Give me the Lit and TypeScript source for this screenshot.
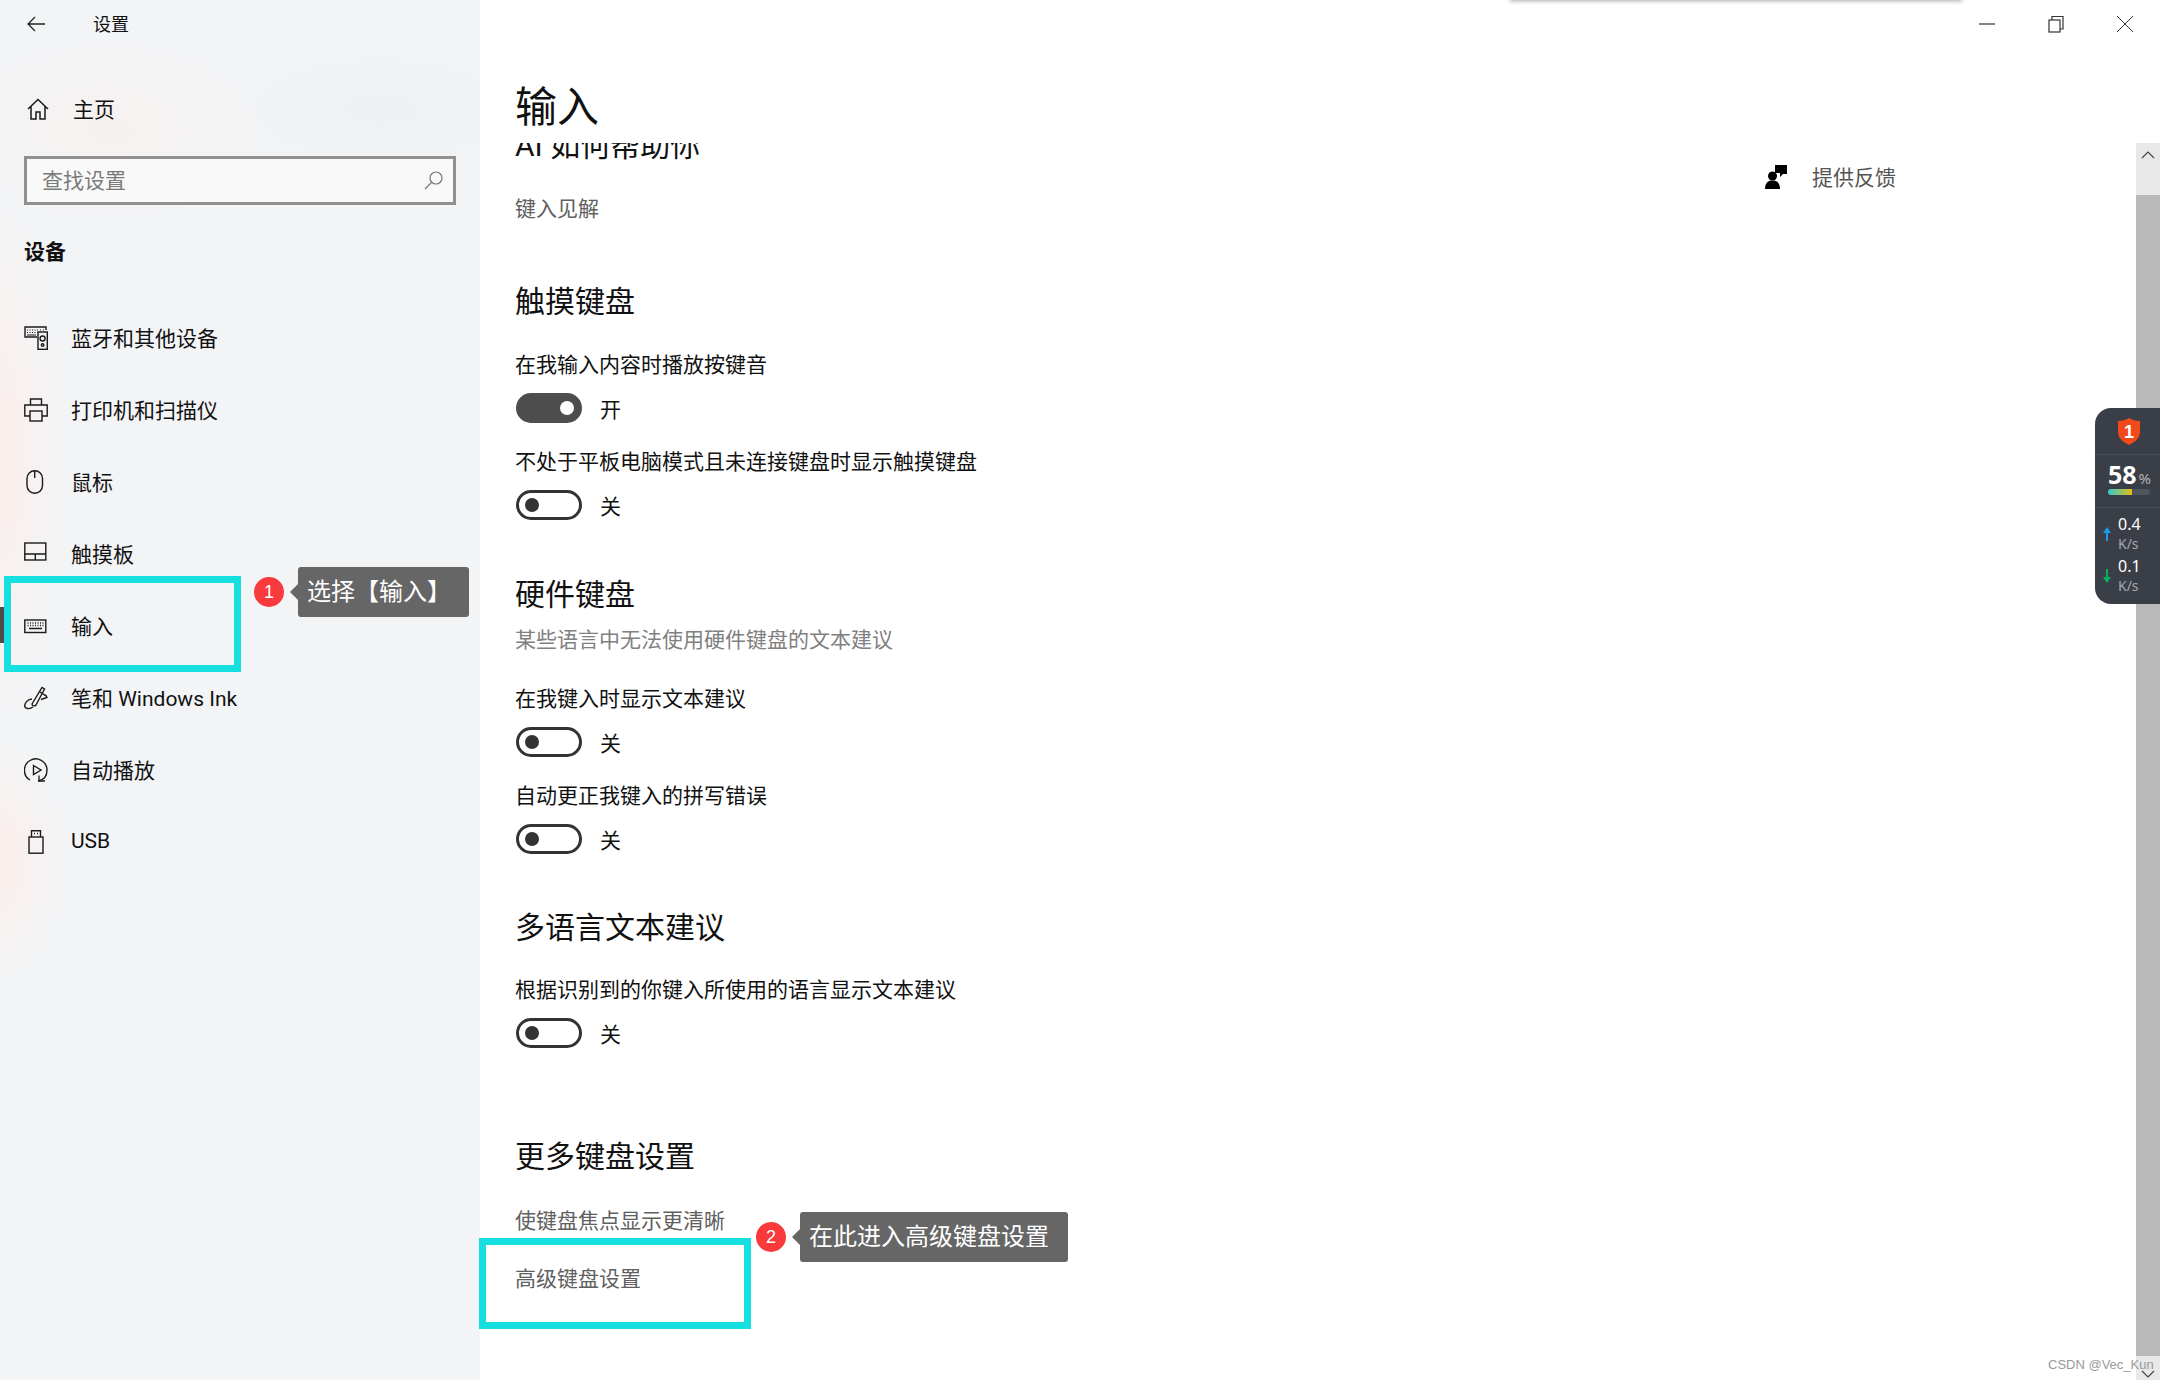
import { LitElement, html, css, svg } from "lit";
import { customElement } from "lit/decorators.js";

const icon = (body: unknown) => html`<svg class="ic" viewBox="0 0 24 24" fill="none" stroke="#1a1a1a" stroke-width="1.4">${body}</svg>`;

const icons: Record<string, unknown> = {
  bt: icon(svg`<path d="M22 4V1H1v10h12"/><path d="M3 4h1M5.500 4h1M8 4h1M10.500 4h1M13 4h1M16 4h1M19 4h1M3 6.500h1M5.500 6.500h1M8 6.500h1M10.500 6.500h1M3 9h9" stroke-width="1.200"/><rect x="14" y="6" width="9.300" height="17.300"/><circle cx="18.600" cy="12.500" r="2.500"/><circle cx="18.600" cy="19" r="1.300"/>`),
  print: icon(svg`<path d="M6.500 7V1h11v6M6 18H.8V7h22.400v11H18"/><rect x="6" y="13" width="12" height="10"/>`),
  mouse: icon(svg`<rect x="3" y=".8" width="15.500" height="22.400" rx="7.700"/><path d="M10.700 1v7"/>`),
  pad: icon(svg`<rect x=".8" y="1" width="21" height="17"/><path d="M.8 12h21M11.300 12v6"/>`),
  kb: icon(svg`<rect x=".8" y="6" width="21" height="12.500"/><path d="M3.500 9h1M6 9h1M8.500 9h1M11 9h1M13.500 9h1M16 9h1M18.500 9h1M3.500 11.500h1M6 11.500h1M8.500 11.500h1M11 11.500h1M13.500 11.500h1M16 11.500h1M18.500 11.500h1M5 14.500h13" stroke-width="1.300"/>`),
  pen: icon(svg`<path d="M8 18 18 1.500l2.500 1.500-8.500 16c-1 1.500-4 1-4-1Z"/><path d="M16 6l4 2.500c2 1 3 2.500 3 3l-6 2M8 13c-4 0-7.500 4-7.300 7 .2 3 5 3.500 8.300 1"/>`),
  play: icon(svg`<path d="M14 23c6-1 9-5.500 9-11A11.300 11.300 0 1 0 6 22"/><path d="M9.500 7.500 17 12l-7.500 4.500Z"/><path d="M15 17.500v5.500h6" stroke-width="1.300"/>`),
  usb: icon(svg`<path d="M7.500 7V.8h9V7"/><rect x="5" y="7" width="14" height="16.200"/><path d="M10 3.500h1M13 3.500h1"/>`),
};

const navItems = [
  ["bt", "蓝牙和其他设备"],
  ["print", "打印机和扫描仪"],
  ["mouse", "鼠标"],
  ["pad", "触摸板"],
  ["kb", "输入"],
  ["pen", "笔和 Windows Ink"],
  ["play", "自动播放"],
  ["usb", "USB"],
];

@customElement("app-root")
export class AppRoot extends LitElement {
  static styles = css`
    :host {
      display: block;
      position: relative;
      width: 2160px;
      height: 1380px;
      overflow: hidden;
      background: #fff;
      color: #111;
      font-family: Roboto, "Noto Sans CJK SC", sans-serif;
      font-size: 21px;
      text-spacing-trim: space-all;
    }
    .window { display: flex; height: 100%; }
    .side {
      width: 480px;
      flex: none;
      display: flex;
      flex-direction: column;
      background:
        radial-gradient(ellipse 60px 260px at 0 460px, #fbeeea, transparent),
        radial-gradient(ellipse 60px 120px at 0 860px, #fbeeea, transparent),
        radial-gradient(ellipse 150px 90px at 110px 130px, #f6f1ef, transparent),
        radial-gradient(ellipse 200px 80px at 380px 110px, #eff0f1, transparent),
        #f3f4f6;
    }
    .side-head { height: 48px; display: flex; align-items: center; padding-left: 27px; font-size: 18px; }
    .side-head span { padding-bottom: 2px; }
    .side-head svg { width: 18px; height: 16px; margin-right: 48px; }
    .home { margin-top: 25px; height: 72px; display: flex; align-items: center; padding-left: 27px; gap: 24px; }
    .home span { padding-bottom: 2px; }
    .home svg { width: 22px; height: 22px; }
    .search {
      margin: 11px 24px 0;
      height: 49px;
      box-sizing: border-box;
      border: 3px solid #919191;
      background: #f9f9f9;
      display: flex;
      align-items: center;
      justify-content: space-between;
      padding: 0 10px 0 15px;
      color: #7a7a7a;
    }
    .search span { padding-bottom: 4px; }
    .search svg { width: 19px; height: 19px; }
    .group { margin: 32px 0 35px 24px; height: 30px; line-height: 30px; font-weight: 700; }
    .nav { position: relative; height: 72px; display: flex; align-items: center; padding-left: 24px; gap: 23px; }
    .nav span { padding-bottom: 2px; }
    .ic { width: 24px; height: 24px; flex: none; }
    .nav.on::before { content: ""; position: absolute; left: 0; top: 17px; width: 4px; height: 36px; background: #4c4c4c; }

    .main { flex: 1; min-width: 0; display: flex; flex-direction: column; }
    .bar { height: 48px; flex: none; display: flex; justify-content: flex-end; padding-right: 1px; }
    .ctl { width: 69px; display: flex; align-items: center; justify-content: center; }
    .ctl svg { width: 18px; height: 18px; }
    .title { height: 95px; flex: none; box-sizing: border-box; padding: 31px 0 0 35px; font-size: 42px; line-height: 58px; color: #111; }
    .body { flex: 1; min-height: 0; display: flex; overflow: hidden; }
    .content { width: 1285px; flex: none; box-sizing: border-box; padding-left: 35px; }
    .h { height: 40px; line-height: 40px; font-size: 30px; white-space: nowrap; color: #111; }
    .t { height: 30px; line-height: 30px; white-space: nowrap; }
    .link { color: #606060; }
    .note { color: #808080; margin-top: 10px; }
    .first-h { margin-top: -17px; }
    .s { margin-top: 24px; }
    .h + .s { margin-top: 28px; }
    .h + .s.tight { margin-top: 27px; }
    .link-first { margin-top: 28px; }
    .link-first.loose { margin-top: 29px; }
    .sec { margin-top: 54px; }
    .sec.hw { margin-top: 55px; }
    .sec.wide { margin-top: 89px; }
    .sec.top { margin-top: 58px; }
    .note + .s { margin-top: 29px; }
    .tog-row { margin: 13px 0 0 1px; height: 30px; display: flex; align-items: center; gap: 18px; }
    .tog {
      width: 66px; height: 30px; box-sizing: border-box; border-radius: 15px;
      border: 3px solid #333; display: flex; align-items: center; padding: 0 6px;
    }
    .tog i { width: 14px; height: 14px; border-radius: 50%; background: #333; }
    .tog.on { background: #4d4d4d; border-color: #4d4d4d; justify-content: flex-end; padding: 0 5px; }
    .tog.on i { background: #fff; }
    .link + .link { margin-top: 28px; }
    .aside { display: flex; align-items: flex-start; gap: 25px; padding-top: 22px; color: #555; }
    .aside svg { width: 22px; height: 24px; }
    .aside span { line-height: 26px; }
    .sb { width: 24px; flex: none; margin-left: auto; display: flex; flex-direction: column; background: #e8e8e8; }
    .sb-btn { flex: none; display: flex; justify-content: center; align-items: center; }
    .sb-btn.up { height: 52px; align-items: flex-start; padding-top: 7px; box-sizing: border-box; }
    .sb-btn.down { height: 24px; align-items: flex-end; padding-bottom: 1px; box-sizing: border-box; }
    .sb-btn svg { width: 14px; height: 10px; }
    .thumb { flex: 1; background: #b9b9b9; }

    .mark { position: absolute; border: 7px solid #16dfdf; box-sizing: border-box; }
    .m1 { left: 4px; top: 576px; width: 237px; height: 96px; }
    .m2 { left: 479px; top: 1238px; width: 272px; height: 91px; }
    .badge {
      position: absolute; width: 30px; height: 30px; border-radius: 50%; background: #f93a3d;
      color: #fff; font: 18px/30px "Liberation Sans", sans-serif; text-align: center;
    }
    .b1 { left: 254px; top: 577px; }
    .b2 { left: 756px; top: 1222px; }
    .tip {
      position: absolute; height: 50px; line-height: 50px; background: #666; color: #fff; border-radius: 3px;
      font-size: 24px; padding-left: 9px; box-sizing: border-box; white-space: nowrap;
    }
    .tip::before {
      content: ""; position: absolute; left: -8px; top: 17px;
      border: 8px solid transparent; border-left: 0; border-right-color: #666;
    }
    .t1 { left: 298px; top: 567px; width: 171px; }
    .t2 { left: 800px; top: 1212px; width: 268px; }

    .shadow { position: absolute; left: 1510px; top: -10px; width: 452px; height: 10px; background: #ddd; box-shadow: 0 1px 4px rgba(0,0,0,.35); }
    .mark-text { position: absolute; left: 2048px; top: 1358px; font: 13px/14px "Liberation Sans", sans-serif; color: #9a9a9a; white-space: nowrap; }

    .widget {
      position: absolute; left: 2095px; top: 408px; width: 65px; height: 196px; box-sizing: border-box;
      background: #3a3e46; border-radius: 16px 0 0 16px; color: #fff;
      display: flex; flex-direction: column; font-family: "Noto Sans", sans-serif;
    }
    .w-top { height: 47px; flex: none; display: flex; justify-content: center; padding-top: 10px; box-sizing: border-box; border-bottom: 1px solid #484c55; }
    .w-top svg { width: 24px; height: 27px; margin-left: 2px; }
    .w-mid { height: 53px; flex: none; box-sizing: border-box; border-bottom: 1px solid #484c55; padding: 5px 0 0 13px; }
    .pct { line-height: 29px; height: 29px; font-size: 25px; font-weight: 700; white-space: nowrap; }
    .pct small { font-size: 15px; font-weight: 400; color: #b4b6ba; margin-left: 2px; }
    .meter { width: 42px; height: 6px; border-radius: 3px; background: #50545c; overflow: hidden; }
    .meter i { display: block; width: 24px; height: 6px; background: linear-gradient(90deg, #35c9cf, #e6be14); }
    .net { display: flex; align-items: center; padding-left: 8px; gap: 7px; height: 40px; margin-top: 2px; flex: none; }
    .net svg { width: 8px; height: 14px; flex: none; }
    .net div { font-size: 16px; line-height: 20px; }
    .net small { display: block; font-size: 14px; line-height: 20px; color: #a6a8ad; }
    .net.first { margin-top: 6px; margin-bottom: 0; }
  `;

  private toggle(on: boolean) {
    return html`<div class="tog-row"><div class="tog ${on ? "on" : ""}"><i></i></div><span>${on ? "开" : "关"}</span></div>`;
  }

  render() {
    return html`
      <div class="window">
        <aside class="side">
          <div class="side-head">
            <svg viewBox="0 0 18 16" fill="none" stroke="#222" stroke-width="1.300"><path d="M18 8H1M8 1 1 8l7 7"/></svg>
            <span>设置</span>
          </div>
          <div class="home">
            <svg viewBox="0 0 22 22" fill="none" stroke="#1a1a1a" stroke-width="1.500"><path d="M1 11 11 1.500 21 11M4 8.500V21h5v-7h4v7h5V8.500"/></svg>
            <span>主页</span>
          </div>
          <div class="search">
            <span>查找设置</span>
            <svg viewBox="0 0 19 19" fill="none" stroke="#777" stroke-width="1.200"><circle cx="12" cy="7" r="6"/><path d="M7.500 11.500 1 18"/></svg>
          </div>
          <div class="group">设备</div>
          ${navItems.map(([k, label]) => html`<div class="nav ${k === "kb" ? "on" : ""}">${icons[k]}<span>${label}</span></div>`)}
        </aside>
        <main class="main">
          <div class="bar">
            <div class="ctl"><svg viewBox="0 0 18 18" fill="none" stroke="#333" stroke-width="1.200"><path d="M1 9h16"/></svg></div>
            <div class="ctl"><svg viewBox="0 0 18 18" fill="none" stroke="#333" stroke-width="1.200"><rect x="2" y="5" width="11" height="12"/><path d="M5 5V1.500h11V14h-3"/></svg></div>
            <div class="ctl"><svg viewBox="0 0 18 18" fill="none" stroke="#333" stroke-width="1"><path d="M1 1l16 16M17 1 1 17"/></svg></div>
          </div>
          <div class="title">输入</div>
          <div class="body">
            <div class="content">
              <div class="h first-h">AI 如何帮助你</div>
              <div class="t link link-first">键入见解</div>

              <div class="h sec top">触摸键盘</div>
              <div class="t s">在我输入内容时播放按键音</div>
              ${this.toggle(true)}
              <div class="t s">不处于平板电脑模式且未连接键盘时显示触摸键盘</div>
              ${this.toggle(false)}

              <div class="h sec hw">硬件键盘</div>
              <div class="t note">某些语言中无法使用硬件键盘的文本建议</div>
              <div class="t s">在我键入时显示文本建议</div>
              ${this.toggle(false)}
              <div class="t s">自动更正我键入的拼写错误</div>
              ${this.toggle(false)}

              <div class="h sec">多语言文本建议</div>
              <div class="t s tight">根据识别到的你键入所使用的语言显示文本建议</div>
              ${this.toggle(false)}

              <div class="h sec wide">更多键盘设置</div>
              <div class="t link link-first loose">使键盘焦点显示更清晰</div>
              <div class="t link">高级键盘设置</div>
            </div>
            <div class="aside">
              <svg viewBox="0 0 22 24"><circle cx="7.500" cy="11" r="4.500"/><path d="M0 24c0-6 3-8.500 7.500-8.500S15 18 15 24Z"/><path d="M10 0h12v9h-4l-3 3V8h-5Z"/></svg>
              <span>提供反馈</span>
            </div>
            <div class="sb">
              <div class="sb-btn up"><svg viewBox="0 0 14 10" fill="none" stroke="#444" stroke-width="1.200"><path d="M1 8l6-6 6 6"/></svg></div>
              <div class="thumb"></div>
              <div class="sb-btn down"><svg viewBox="0 0 14 10" fill="none" stroke="#444" stroke-width="1.200"><path d="M1 2l6 6 6-6"/></svg></div>
            </div>
          </div>
        </main>
      </div>

      <div class="shadow"></div>
      <div class="mark m1"></div>
      <div class="badge b1">1</div>
      <div class="tip t1">选择【输入】</div>
      <div class="mark m2"></div>
      <div class="badge b2">2</div>
      <div class="tip t2">在此进入高级键盘设置</div>

      <div class="widget">
        <div class="w-top">
          <svg viewBox="0 0 24 27"><path d="M12 0c3 2 7 3 11 3v11c0 6-5 10-11 13C6 24 1 20 1 14V3c4 0 8-1 11-3Z" fill="#f2481a"/><text x="12" y="20" text-anchor="middle" fill="#fff" font-family="Liberation Sans" font-weight="700" font-size="18">1</text></svg>
        </div>
        <div class="w-mid">
          <div class="pct">58<small>%</small></div>
          <div class="meter"><i></i></div>
        </div>
        <div class="net first">
          <svg viewBox="0 0 8 14"><path d="M4 0l4 6H5v8H3V6H0Z" fill="#1a9bee"/></svg>
          <div>0.4<small>K/s</small></div>
        </div>
        <div class="net">
          <svg viewBox="0 0 8 14"><path d="M4 14 0 8h3V0h2v8h3Z" fill="#08b060"/></svg>
          <div>0.1<small>K/s</small></div>
        </div>
      </div>
      <div class="mark-text">CSDN @Vec_Kun</div>
    `;
  }
}
